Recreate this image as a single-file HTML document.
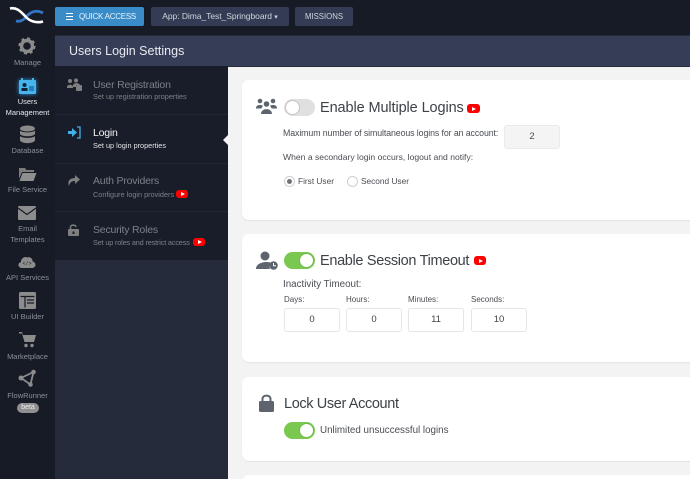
<!DOCTYPE html>
<html><head><meta charset="utf-8"><style>
html,body{margin:0;padding:0;width:690px;height:479px;overflow:hidden;background:#f3f3f3;font-family:"Liberation Sans",sans-serif}
#w{position:relative;width:690px;height:479px;overflow:hidden}
.a{position:absolute;white-space:nowrap}
.side{position:absolute;left:0;top:0;width:55px;height:479px;background:#171b26}
.top{position:absolute;left:55px;top:0;width:635px;height:35px;background:#171b26}
.sl{position:absolute;left:0;width:55px;text-align:center;font-size:7.5px;line-height:11px;color:#8b8f97}
.btn{position:absolute;top:7px;height:19px;border-radius:2px;background:#333c54;color:#cfd3da;font-size:8.5px;line-height:19px;text-align:center;white-space:nowrap}
.mt{position:absolute;left:93px;font-size:10.5px;letter-spacing:-.2px;color:#7c8087;white-space:nowrap}
.ms{position:absolute;left:93px;font-size:7.3px;color:#7c8087;white-space:nowrap}
.card{position:absolute;left:242px;width:460px;background:#fff;border-radius:7px;box-shadow:0 1px 1px #e4e4e4}
.h{position:absolute;font-size:14.5px;color:#3d4148;white-space:nowrap}
.t{position:absolute;font-size:8.6px;color:#4a4d53;white-space:nowrap}
.inp{position:absolute;top:308px;width:54px;height:22px;border:1px solid #e3e6ea;border-radius:3px;background:#fff;text-align:center;font-size:9.5px;line-height:22px;color:#3f4349}
.yt{position:absolute;background:#f00;border-radius:3px}
.yt:after{content:"";position:absolute;left:40%;top:28%;border-left:4px solid #fff;border-top:2.2px solid transparent;border-bottom:2.2px solid transparent}
.tog{position:absolute;width:31px;height:17px;border-radius:9px;background:#7ac84f}
.tog:after{content:"";position:absolute;right:1px;top:1px;width:13px;height:13px;border-radius:50%;background:#fff;border:1px solid #6ebb45}
.off{background:#e0e0e0}
.off:after{left:1px;right:auto;border-color:#c4c4c4}
</style></head><body><div id="w">
<div class="side"></div><div class="top"></div>

<svg class="a" style="left:8px;top:5px" width="38" height="22" viewBox="8 5 38 22" fill="none"><path d="M16 21C22 22.500 25 18 28 15C32 11 38 10 43 13" stroke="#3474c4" stroke-width="2.800"/><path d="M10 8.500C17 7 21 12 25 16C29 21 36 23.500 43 21.500" stroke="#fff" stroke-width="2.600"/></svg>

<div class="a" style="left:55px;top:7px;width:89px;height:19px;border-radius:2px;background:#3a8cc9;color:#e8f3fa;font-size:8px;line-height:19px"><span class="a" style="left:11px;top:6px;width:7px;height:1.4px;background:#fff;box-shadow:0 3px #fff,0 6px #fff"></span><span class="a" style="left:24px;letter-spacing:-.25px">QUICK ACCESS</span></div>
<div class="btn" style="left:151px;width:138px;letter-spacing:-.05px">App: Dima_Test_Springboard <span style="font-size:7px">&#9662;</span></div>
<div class="btn" style="left:295px;width:58px;font-size:7.8px">MISSIONS</div>

<!-- sidebar icons -->
<svg class="a" style="left:18px;top:37px" width="18" height="18" viewBox="0 0 18 18"><circle cx="9" cy="9" r="5.5" fill="none" stroke="#8a8a8a" stroke-width="3.4"/><circle cx="9" cy="9" r="7.3" fill="none" stroke="#8a8a8a" stroke-width="2.6" stroke-dasharray="2.9 2.8"/></svg>
<div class="sl" style="top:57px">Manage</div>
<svg class="a" style="left:14px;top:75px" width="27" height="24" viewBox="0 0 27 24"><rect x="5" y="5" width="17" height="14" rx="1" fill="#47b4ee" style="filter:drop-shadow(0 0 2px #2c9ade)"/><rect x="7" y="3" width="2" height="3" fill="#47b4ee"/><rect x="18" y="3" width="2" height="3" fill="#47b4ee"/><circle cx="10.5" cy="10" r="2" fill="#123"/><rect x="7.5" y="13" width="6" height="3" fill="#123"/><rect x="15" y="11" width="5" height="5" fill="#2a7fb5"/></svg>
<div class="sl" style="top:96px;color:#e6e8ec">Users</div>
<div class="sl" style="top:107px;color:#e6e8ec">Management</div>
<svg class="a" style="left:19px;top:125px" width="17" height="19" viewBox="0 0 17 19" fill="#8a8a8a"><ellipse cx="8.5" cy="3.5" rx="7.5" ry="3"/><path d="M1 5.500C3 8 14 8 16 5.500V9C14 12 3 12 1 9ZM1 11C3 13.500 14 13.500 16 11V15.500C14 19 3 19 1 15.500Z"/></svg>
<div class="sl" style="top:145px">Database</div>
<svg class="a" style="left:18px;top:166px" width="19" height="16" viewBox="0 0 19 16"><path d="M1 2H7L8.500 4H16V6H4L1 13Z" fill="#7b7b7b"/><path d="M4.500 7H18.500L15.500 15H1.500Z" fill="#8f8f8f"/></svg>
<div class="sl" style="top:184px">File Service</div>
<svg class="a" style="left:18px;top:206px" width="18" height="14" viewBox="0 0 18 14"><rect width="18" height="14" rx="1" fill="#8c8c8c"/><path d="M0 2L9 8.500L18 2" fill="none" stroke="#171b26" stroke-width="1.200"/></svg>
<div class="sl" style="top:223px">Email</div>
<div class="sl" style="top:234px">Templates</div>
<svg class="a" style="left:18px;top:255px" width="18" height="14" viewBox="0 0 18 14"><path d="M4 13C0 13-1 8 3 7C3 3 7 1 9.500 2.500C12 1 15 4 14.500 6.500C18.500 7 18.500 13 14 13Z" fill="#8c8c8c"/><text x="9" y="10" font-size="5" text-anchor="middle" fill="#171b26" font-family="Liberation Mono">&lt;/&gt;</text></svg>
<div class="sl" style="top:272px">API Services</div>
<svg class="a" style="left:19px;top:292px" width="17" height="17" viewBox="0 0 17 17"><rect width="17" height="17" rx="1.500" fill="#8c8c8c"/><path d="M1.500 4.500H15.500M6 5V15.500M8 8H15M8 11H15" stroke="#171b26" stroke-width="1.200" fill="none"/></svg>
<div class="sl" style="top:311px">UI Builder</div>
<svg class="a" style="left:18px;top:331px" width="19" height="17" viewBox="0 0 19 17" fill="#8c8c8c"><path d="M1 1H4L5 4H18L16 11H6.500L4 2.500H1Z"/><circle cx="8" cy="14.500" r="1.700"/><circle cx="14" cy="14.500" r="1.700"/></svg>
<div class="sl" style="top:351px">Marketplace</div>
<svg class="a" style="left:18px;top:369px" width="18" height="18" viewBox="0 0 18 18"><path d="M3 9L15.500 3L12.500 15.500Z" fill="none" stroke="#8c8c8c" stroke-width="1.800"/><circle cx="3" cy="9" r="2.500" fill="#8c8c8c"/><circle cx="15.500" cy="3" r="2.300" fill="#8c8c8c"/><circle cx="12.500" cy="15.500" r="2.300" fill="#8c8c8c"/></svg>
<div class="sl" style="top:390px">FlowRunner</div>
<div class="a" style="left:17px;top:403px;width:22px;height:10px;border-radius:5px;background:#8f8f8f;color:#eee;font-size:7px;line-height:10px;text-align:center">beta</div>

<!-- middle -->
<div class="a" style="left:55px;top:35px;width:635px;height:444px;background:#252b3a"></div>
<div class="a" style="left:55px;top:36px;width:635px;height:30px;background:#353d57"></div>
<div class="a" style="left:69px;top:43px;font-size:12.5px;line-height:16px;color:#e9ebf0">Users Login Settings</div>
<div class="a" style="left:55px;top:66px;width:173px;height:194px;background:#191d29"></div>
<div class="a" style="left:55px;top:114px;width:173px;height:1px;background:#222633"></div>
<div class="a" style="left:55px;top:163px;width:173px;height:1px;background:#222633"></div>
<div class="a" style="left:55px;top:211px;width:173px;height:1px;background:#222633"></div>

<svg class="a" style="left:67px;top:78px" width="15" height="13" viewBox="0 0 15 13" fill="#7f7f7f"><circle cx="3" cy="3" r="2"/><circle cx="9" cy="2.500" r="2"/><path d="M0 9C0 6 6 6 6 9V10H0ZM6 7C7 4.500 12 4.500 13 7H9V9H6Z"/><rect x="9" y="7" width="6" height="6" rx="1"/></svg>
<div class="mt" style="top:79px">User Registration</div>
<div class="ms" style="top:92px">Set up registration properties</div>

<svg class="a" style="left:68px;top:126px" width="13" height="13" viewBox="0 0 13 13"><path d="M0 5H4V2L9 6.500L4 11V8H0Z" fill="#42b0ea"/><path d="M9 1H12V12H9" fill="none" stroke="#42b0ea" stroke-width="1.300"/></svg>
<div class="mt" style="top:127px;color:#f2f3f5">Login</div>
<div class="ms" style="top:141px;color:#e2e4e8">Set up login properties</div>

<svg class="a" style="left:68px;top:175px" width="12" height="11" viewBox="0 0 12 11"><path d="M7 0L12 4.500L7 9V6C4 6 2 7 1 11C-1 6 2 3 7 3Z" fill="#7f7f7f"/></svg>
<div class="mt" style="top:175px">Auth Providers</div>
<div class="ms" style="top:190px">Configure login providers</div>
<div class="yt" style="left:176px;top:190px;width:12px;height:8px"></div>

<svg class="a" style="left:68px;top:224px" width="11" height="12" viewBox="0 0 11 12"><rect y="5" width="11" height="7" rx="1" fill="#7f7f7f"/><path d="M2.500 5V3C2.500 0.500 7.500 0.500 8 3" fill="none" stroke="#7f7f7f" stroke-width="1.500"/><rect x="4.500" y="7.500" width="2" height="2.500" fill="#191d29"/></svg>
<div class="mt" style="top:224px">Security Roles</div>
<div class="ms" style="top:238px;letter-spacing:-.16px">Set up roles and restrict access</div>
<div class="yt" style="left:193px;top:238px;width:12px;height:8px"></div>

<!-- content -->
<div class="a" style="left:228px;top:67px;width:462px;height:412px;background:#f3f3f3"></div>
<div class="a" style="left:223px;top:135px;border-right:5px solid #f3f3f3;border-top:5px solid transparent;border-bottom:5px solid transparent"></div>

<div class="card" style="top:80px;height:140px"></div>
<div class="card" style="top:234px;height:128px"></div>
<div class="card" style="top:377px;height:84px"></div>
<div class="card" style="top:475px;height:20px"></div>

<svg class="a" style="left:256px;top:97px" width="21" height="19" viewBox="0 0 21 19" fill="#5d646d"><circle cx="4" cy="4" r="2.300"/><circle cx="17" cy="4" r="2.300"/><circle cx="10.500" cy="7" r="2.800"/><path d="M0 11C0 7.500 6 7.500 7 9C6 10 5.500 11 5.500 11.500H0ZM21 11C21 7.500 15 7.500 14 9C15 10 15.500 11 15.500 11.500H21ZM5 17C5 10.500 16 10.500 16 17Z"/></svg>
<div class="tog off" style="left:284px;top:99px"></div>
<div class="h" style="left:320px;top:100px;letter-spacing:-.1px">Enable Multiple Logins</div>
<div class="yt" style="left:467px;top:104px;width:13px;height:9px"></div>
<div class="t" style="left:283px;top:128px;font-size:8.8px;letter-spacing:-.1px">Maximum number of simultaneous logins for an account:</div>
<div class="a" style="left:504px;top:125px;width:54px;height:22px;border:1px solid #eaeaea;border-radius:3px;background:#f4f4f4;text-align:center;font-size:9.5px;line-height:22px;color:#4a4d53">2</div>
<div class="t" style="left:283px;top:152px">When a secondary login occurs, logout and notify:</div>
<div class="a" style="left:284px;top:176px;width:9px;height:9px;border:1px solid #cfcfcf;border-radius:50%;background:#fff"></div>
<div class="a" style="left:287px;top:179px;width:5px;height:5px;border-radius:50%;background:#6d7279"></div>
<div class="t" style="left:298px;top:176px;font-size:8.3px">First User</div>
<div class="a" style="left:347px;top:176px;width:9px;height:9px;border:1px solid #cfcfcf;border-radius:50%;background:#fff"></div>
<div class="t" style="left:361px;top:176px;font-size:8.3px">Second User</div>

<svg class="a" style="left:256px;top:251px" width="22" height="19" viewBox="0 0 22 19" fill="#5d646d"><circle cx="9" cy="5" r="4.500"/><path d="M0 18C0 10.500 13 10 15 12C13 14 13 16 14 18Z"/><circle cx="17.500" cy="14.500" r="4.300"/><path d="M17.500 12V14.800H20" stroke="#fff" fill="none"/></svg>
<div class="tog" style="left:284px;top:252px"></div>
<div class="h" style="left:320px;top:253px;letter-spacing:-.33px">Enable Session Timeout</div>
<div class="yt" style="left:474px;top:256px;width:12px;height:9px"></div>
<div class="t" style="left:283px;top:279px;font-size:9.8px">Inactivity Timeout:</div>
<div class="t" style="left:284px;top:295px;font-size:8px">Days:</div>
<div class="t" style="left:346px;top:295px;font-size:8px">Hours:</div>
<div class="t" style="left:408px;top:295px;font-size:8px">Minutes:</div>
<div class="t" style="left:471px;top:295px;font-size:8px">Seconds:</div>
<div class="inp" style="left:284px">0</div>
<div class="inp" style="left:346px">0</div>
<div class="inp" style="left:408px">11</div>
<div class="inp" style="left:471px">10</div>

<svg class="a" style="left:259px;top:394px" width="15" height="18" viewBox="0 0 15 18"><rect y="7" width="15" height="11" rx="1.500" fill="#5d646d"/><path d="M3.500 8V5C3.500 0.500 11.500 0.500 11.500 5V8" fill="none" stroke="#5d646d" stroke-width="2"/></svg>
<div class="h" style="left:284px;top:396px;letter-spacing:-.37px">Lock User Account</div>
<div class="tog" style="left:284px;top:422px"></div>
<div class="t" style="left:320px;top:425px;font-size:9.8px">Unlimited unsuccessful logins</div>
</div></body></html>
